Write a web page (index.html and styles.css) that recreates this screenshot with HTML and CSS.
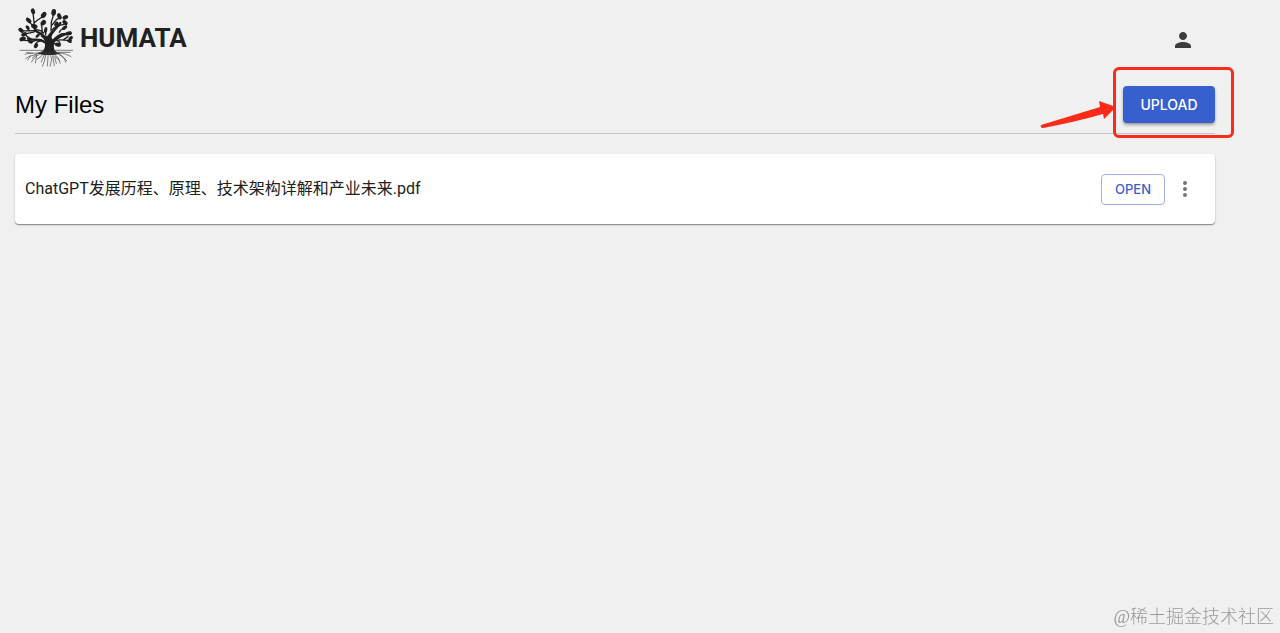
FILE: index.html
```html
<!DOCTYPE html>
<html lang="zh-CN">
<head>
<meta charset="utf-8">
<meta name="viewport" content="width=device-width, initial-scale=1">
<title>Humata - My Files</title>
<link rel="stylesheet" href="styles.css">
</head>
<body>
<div class="page">
  <header class="topbar">
    <a class="brand" href="#">
      <svg class="brand-tree" viewBox="24 24 168 180" aria-hidden="true">
        <g class="tree-limb">
          <path class="trunk" d="M83 161C97 157 103 150 105 138C107 122 101 114 91 108L97 104C105 109 111 112 116 103L127 90L131 96C123 106 124 116 128 118C136 111 145 101 159 99L161 103C145 109 136 118 132 133C130 148 134 156 151 161L130 165H102Z"/>
          <g stroke-width="7"><path d="M109 118C99 99 86 101 77 92L70 78"/><path d="M120 109C127 94 141 83 151 69"/><path d="M130 126C143 112 158 103 178 101"/><path d="M112 133C97 116 83 119 66 119L54 116"/></g>
          <g stroke-width="4"><path d="M76 92C63 91 53 94 39 92"/><path d="M78 92C68 100 60 97 46 102"/><path d="M71 80L59 67M73 80L71 55L69 39M73 68L83 60L101 48"/><path d="M94 103C100 91 96 86 94 74L103 62M107 105L107 91M101 99C94 89 87 90 80 89"/><path d="M123 93L124 74C120 65 130 60 130 40M125 76L140 58L153 52M127 89C135 78 147 77 162 73"/><path d="M148 97C152 88 156 85 163 87M157 101L176 100M136 122C153 116 164 123 184 121M161 119L174 110"/><path d="M105 127C91 120 80 124 77 132M78 121C68 124 65 128 56 122L41 121M65 119L52 110L45 102"/><path d="M128 131L142 132M140 121C150 123 153 132 145 134"/></g>
        </g>
        <g class="tree-leaf">
          <ellipse cx="69" cy="34" rx="6" ry="9" transform="rotate(-18 69 34)"/><ellipse cx="101" cy="45" rx="7" ry="10" transform="rotate(38 101 45)"/><ellipse cx="131" cy="37" rx="7" ry="10" transform="rotate(8 131 37)"/><ellipse cx="148" cy="49" rx="6" ry="10" transform="rotate(-18 148 49)"/><ellipse cx="166" cy="52" rx="6" ry="9" transform="rotate(62 166 52)"/><ellipse cx="56" cy="61" rx="6" ry="10" transform="rotate(-44 56 61)"/><ellipse cx="73" cy="79" rx="7" ry="10" transform="rotate(-68 73 79)"/><ellipse cx="100" cy="68" rx="7" ry="9" transform="rotate(48 100 68)"/><ellipse cx="107" cy="90" rx="5" ry="9" transform="rotate(12 107 90)"/><ellipse cx="139" cy="72" rx="6" ry="8" transform="rotate(32 139 72)"/><ellipse cx="165" cy="68" rx="6" ry="9" transform="rotate(-45 165 68)"/><ellipse cx="164" cy="83" rx="5" ry="9" transform="rotate(56 164 83)"/><ellipse cx="176" cy="100" rx="6" ry="10" transform="rotate(78 176 100)"/><ellipse cx="182" cy="115" rx="5" ry="8" transform="rotate(48 182 115)"/><ellipse cx="178" cy="124" rx="4" ry="8" transform="rotate(-65 178 124)"/><ellipse cx="144" cy="134" rx="6" ry="9" transform="rotate(-75 144 134)"/><ellipse cx="78" cy="137" rx="6" ry="8" transform="rotate(28 78 137)"/><ellipse cx="61" cy="125" rx="5" ry="8" transform="rotate(-65 61 125)"/><ellipse cx="38" cy="117" rx="6" ry="10" transform="rotate(70 38 117)"/><ellipse cx="42" cy="103" rx="6" ry="9" transform="rotate(60 42 103)"/><ellipse cx="33" cy="91" rx="6" ry="9" transform="rotate(-50 33 91)"/><ellipse cx="53" cy="83" rx="5" ry="8" transform="rotate(-35 53 83)"/><ellipse cx="83" cy="107" rx="4" ry="8" transform="rotate(48 83 107)"/>
        </g>
        <g class="tree-root">
          <path d="M29 151H102M129 151H189"/>
          <path d="M103 153C82 164 65 156 44 163M91 156C69 170 59 165 46 177M96 155C83 169 70 172 64 187M80 164L76 190M101 155L93 170L81 178M107 156L93 187M109 157L104 180L97 200M115 157L112 199M118 155L125 177L120 200M121 157L135 174L139 191M128 169L133 198M126 155L145 174L151 191M132 154L154 168L171 183M137 156L166 162L184 170M146 159L164 175L167 188M143 157L182 157M69 160L49 157M62 165L53 181M83 160L66 175M134 168L149 182"/>
        </g>
      </svg>
      <span class="brand-name">HUMATA</span>
    </a>
    <button class="icon-button account" type="button" aria-label="Account">
      <svg width="24" height="24" viewBox="0 0 24 24" aria-hidden="true"><path fill="currentColor" d="M12 12c2.210 0 4-1.790 4-4s-1.790-4-4-4-4 1.790-4 4 1.790 4 4 4zm0 2c-2.670 0-8 1.340-8 4v2h16v-2c0-2.660-5.330-4-8-4z"/></svg>
    </button>
  </header>
  <main>
    <div class="heading">
      <h1 class="title">My Files</h1>
      <div class="upload-area">
        <button class="upload" type="button">UPLOAD</button>
        <div class="highlight"></div>
        <svg class="arrow" width="76" height="30" viewBox="0 0 76 30" aria-hidden="true"><path fill="#fa2c19" d="M1 25L60 7L59 1L76 7L64 19L63 14Q35 22 3 28Q0 28 1 25Z"/></svg>
      </div>
    </div>
    <ul class="files">
      <li class="file">
        <span class="file-name">ChatGPT发展历程、原理、技术架构详解和产业未来.pdf</span>
        <button class="open" type="button">OPEN</button>
        <button class="icon-button more" type="button" aria-label="More options">
          <svg width="24" height="24" viewBox="0 0 24 24" aria-hidden="true"><g fill="currentColor"><circle cx="12" cy="6" r="2"/><circle cx="12" cy="12" r="2"/><circle cx="12" cy="18" r="2"/></g></svg>
        </button>
      </li>
    </ul>
  </main>
</div>
<div class="watermark">@稀土掘金技术社区</div>
</body>
</html>
```
FILE: styles.css
```css
* {
  box-sizing: border-box;
}

body {
  margin: 0;
  min-height: 100vh;
  background: #f0f0f0;
  color: #212121;
  font-family: "Liberation Sans", "Noto Sans CJK SC", sans-serif;
}

button {
  font-family: Inter, "Liberation Sans", sans-serif;
  font-weight: 500;
  cursor: pointer;
}

.page {
  margin-right: 65px;
  margin-left: 15px;
}

.topbar {
  display: flex;
  align-items: center;
  justify-content: space-between;
  padding: 8px 12px 8px 3px;
}

.brand {
  display: flex;
  align-items: center;
  gap: 6px;
  color: #212121;
  text-decoration: none;
}

.brand-tree {
  width: 56px;
  height: 60px;
}

.tree-limb {
  fill: none;
  stroke: #212121;
  stroke-linecap: round;
}

.trunk,
.tree-leaf {
  fill: #212121;
  stroke: none;
}

.tree-root {
  fill: none;
  stroke: #444;
  stroke-width: 2;
}

.brand-name {
  font-family: Roboto, sans-serif;
  font-size: 26px;
  font-weight: 700;
  line-height: 32px;
}

.icon-button {
  display: flex;
  padding: 8px;
  border: 0;
  background: none;
}

.account {
  margin-top: 4px;
  color: #3c3c3c;
}

.heading {
  display: flex;
  align-items: center;
  justify-content: space-between;
  padding: 10px 0;
  border-bottom: 1px solid #c6c6c6;
}

.title {
  margin: 0;
  color: #000;
  font-size: 24px;
  font-weight: 400;
  line-height: 34px;
}

.upload-area {
  position: relative;
}

.upload {
  display: block;
  min-width: 92px;
  padding: 6px 15px;
  border: 0;
  border-radius: 4px;
  background: #385fce;
  color: #fff;
  font-size: 14px;
  line-height: 25px;
  box-shadow: 0 2px 3px rgba(0, 0, 0, 0.35);
}

.highlight {
  position: absolute;
  inset: -19px -19px -15px -10px;
  border: 3px solid #fa2c19;
  border-radius: 6px;
  pointer-events: none;
}

.arrow {
  position: absolute;
  top: 14px;
  right: 99px;
  pointer-events: none;
}

.files {
  margin: 20px 0 0;
  padding: 0;
  list-style: none;
}

.file {
  display: flex;
  align-items: center;
  padding: 15px 10px;
  border-radius: 4px;
  background: #fff;
  box-shadow: 0 1px 1px rgba(0, 0, 0, 0.4), 0 1px 3px rgba(0, 0, 0, 0.1);
}

.file-name {
  flex: 1;
  font-family: Roboto, "Noto Sans CJK SC", sans-serif;
  font-size: 16px;
  line-height: 24px;
}

.open {
  min-width: 64px;
  padding: 3px 10px;
  border: 1px solid #9bafe7;
  border-radius: 4px;
  background: #fff;
  color: #385fce;
  font-size: 13px;
  line-height: 23px;
}

.more {
  color: #757575;
}

.watermark {
  position: fixed;
  right: 6px;
  bottom: 3px;
  color: #999;
  font-family: "Liberation Serif", "Noto Sans CJK SC", serif;
  font-size: 18px;
  font-weight: 300;
  line-height: 26px;
}
```
